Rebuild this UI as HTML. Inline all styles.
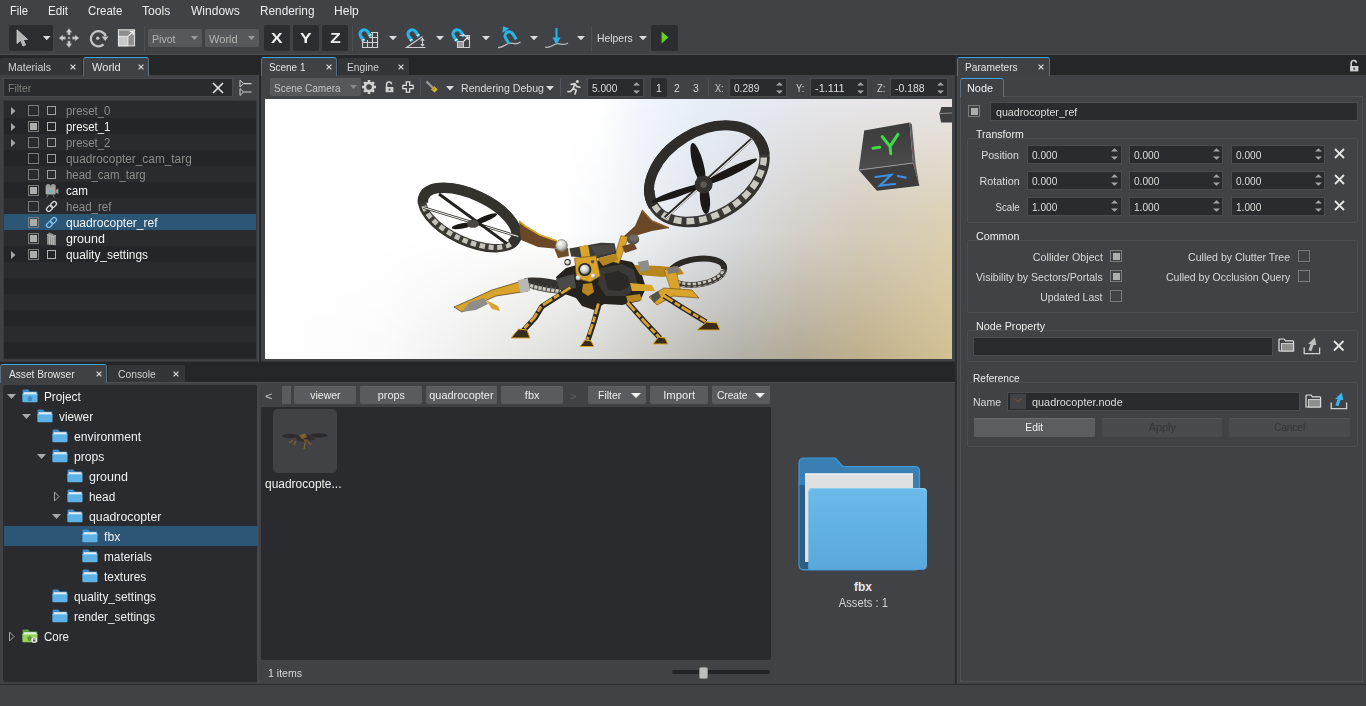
<!DOCTYPE html>
<html><head><meta charset="utf-8"><title>Editor</title>
<style>
html,body{margin:0;padding:0;}
body{width:1366px;height:706px;overflow:hidden;background:#414246;font-family:"Liberation Sans",sans-serif;font-size:12px;position:relative;}
#r{position:absolute;left:0;top:0;width:1366px;height:706px;overflow:hidden;}
#r div,#r svg{position:absolute;}
#r svg{overflow:visible;}
</style></head><body><div id="r">
<div style="left:0px;top:54px;width:1366px;height:1px;background:#4e4f53;"></div>
<div style="left:0px;top:55px;width:1366px;height:20px;background:#252628;"></div>
<div style="left:0px;top:362px;width:957px;height:20px;background:#252628;"></div>
<div style="left:0px;top:361px;width:957px;height:1px;background:#35363a;"></div>
<div style="left:0px;top:382px;width:957px;height:1px;background:#4e4f53;"></div>
<div style="left:259px;top:55px;width:2px;height:327px;background:#252628;"></div>
<div style="left:258px;top:75px;width:1px;height:287px;background:#4a4b4f;"></div>
<div style="left:955px;top:55px;width:2px;height:630px;background:#2c2d30;"></div>
<div style="left:957px;top:75px;width:1px;height:610px;background:#4a4b4f;"></div>
<div style="left:0px;top:684px;width:1366px;height:1px;background:#2c2d30;"></div>
<div style="left:0px;top:685px;width:1366px;height:21px;background:#414246;"></div>
<div style="left:0px;top:58px;width:82px;height:17px;background:#343538;border-radius:2px 2px 0 0;"></div>
<div style="left:8.00px;top:59.20px;line-height:16px;font-size:10.67px;color:#d0d0d0;transform:scaleX(0.9944);transform-origin:0 50%;white-space:nowrap;">Materials</div>
<svg style="left:69.5px;top:63.6px;" width="6" height="6" viewBox="0 0 6 6"><path d="M0.6 0.6L5.4 5.4M5.4 0.6L0.6 5.4" stroke="#d8d8d8" stroke-width="1.25"/></svg>
<div style="left:83px;top:57px;width:66px;height:19px;background:#404145;border:1px solid #5b6f7c;border-bottom:none;border-top:1px solid #3da5e0;border-radius:3px 3px 0 0;box-sizing:border-box;"></div>
<div style="left:91.50px;top:59.20px;line-height:16px;font-size:10.67px;color:#e4e4e4;transform:scaleX(1.0404);transform-origin:0 50%;white-space:nowrap;">World</div>
<svg style="left:137.5px;top:63.6px;" width="6" height="6" viewBox="0 0 6 6"><path d="M0.6 0.6L5.4 5.4M5.4 0.6L0.6 5.4" stroke="#d8d8d8" stroke-width="1.25"/></svg>
<div style="left:261px;top:57px;width:76px;height:19px;background:#404145;border:1px solid #5b6f7c;border-bottom:none;border-top:1px solid #3da5e0;border-radius:3px 3px 0 0;box-sizing:border-box;"></div>
<div style="left:269.00px;top:59.20px;line-height:16px;font-size:10.67px;color:#e4e4e4;transform:scaleX(0.9315);transform-origin:0 50%;white-space:nowrap;">Scene 1</div>
<svg style="left:325.5px;top:63.6px;" width="6" height="6" viewBox="0 0 6 6"><path d="M0.6 0.6L5.4 5.4M5.4 0.6L0.6 5.4" stroke="#d8d8d8" stroke-width="1.25"/></svg>
<div style="left:338px;top:58px;width:71px;height:17px;background:#343538;border-radius:2px 2px 0 0;"></div>
<div style="left:347.00px;top:59.20px;line-height:16px;font-size:10.67px;color:#d0d0d0;transform:scaleX(0.9606);transform-origin:0 50%;white-space:nowrap;">Engine</div>
<svg style="left:397.5px;top:63.6px;" width="6" height="6" viewBox="0 0 6 6"><path d="M0.6 0.6L5.4 5.4M5.4 0.6L0.6 5.4" stroke="#d8d8d8" stroke-width="1.25"/></svg>
<div style="left:957px;top:57px;width:93px;height:19px;background:#404145;border:1px solid #5b6f7c;border-bottom:none;border-top:1px solid #3da5e0;border-radius:3px 3px 0 0;box-sizing:border-box;"></div>
<div style="left:965.00px;top:59.20px;line-height:16px;font-size:10.67px;color:#e4e4e4;transform:scaleX(0.9565);transform-origin:0 50%;white-space:nowrap;">Parameters</div>
<svg style="left:1037.5px;top:63.6px;" width="6" height="6" viewBox="0 0 6 6"><path d="M0.6 0.6L5.4 5.4M5.4 0.6L0.6 5.4" stroke="#d8d8d8" stroke-width="1.25"/></svg>
<div style="left:0px;top:364px;width:107px;height:19px;background:#404145;border:1px solid #5b6f7c;border-bottom:none;border-top:1px solid #3da5e0;border-radius:3px 3px 0 0;box-sizing:border-box;"></div>
<div style="left:8.50px;top:366.20px;line-height:16px;font-size:10.67px;color:#e4e4e4;transform:scaleX(0.9546);transform-origin:0 50%;white-space:nowrap;">Asset Browser</div>
<svg style="left:95.5px;top:370.6px;" width="6" height="6" viewBox="0 0 6 6"><path d="M0.6 0.6L5.4 5.4M5.4 0.6L0.6 5.4" stroke="#d8d8d8" stroke-width="1.25"/></svg>
<div style="left:108px;top:365px;width:77px;height:17px;background:#343538;border-radius:2px 2px 0 0;"></div>
<div style="left:117.50px;top:366.20px;line-height:16px;font-size:10.67px;color:#d0d0d0;transform:scaleX(0.9665);transform-origin:0 50%;white-space:nowrap;">Console</div>
<svg style="left:172.5px;top:370.6px;" width="6" height="6" viewBox="0 0 6 6"><path d="M0.6 0.6L5.4 5.4M5.4 0.6L0.6 5.4" stroke="#d8d8d8" stroke-width="1.25"/></svg>
<svg style="left:1349px;top:60px;" width="10" height="12" viewBox="0 0 10 12"><path d="M2.2 6V3.4a2.6 2.6 0 0 1 5.2-.6" fill="none" stroke="#cfcfcf" stroke-width="1.6"/><rect x="1" y="6" width="8.4" height="5.4" fill="#cfcfcf"/><rect x="4.3" y="7.6" width="1.8" height="2.2" fill="#555"/></svg>
<div style="left:10.00px;top:3.00px;line-height:16px;font-size:12px;color:#ececec;transform:scaleX(0.9279);transform-origin:0 50%;white-space:nowrap;">File</div>
<div style="left:48.00px;top:3.00px;line-height:16px;font-size:12px;color:#ececec;transform:scaleX(0.9720);transform-origin:0 50%;white-space:nowrap;">Edit</div>
<div style="left:88.30px;top:3.00px;line-height:16px;font-size:12px;color:#ececec;transform:scaleX(0.9532);transform-origin:0 50%;white-space:nowrap;">Create</div>
<div style="left:142.00px;top:3.00px;line-height:16px;font-size:12px;color:#ececec;transform:scaleX(1.0118);transform-origin:0 50%;white-space:nowrap;">Tools</div>
<div style="left:191.00px;top:3.00px;line-height:16px;font-size:12px;color:#ececec;transform:scaleX(1.0016);transform-origin:0 50%;white-space:nowrap;">Windows</div>
<div style="left:259.60px;top:3.00px;line-height:16px;font-size:12px;color:#ececec;transform:scaleX(0.9844);transform-origin:0 50%;white-space:nowrap;">Rendering</div>
<div style="left:333.70px;top:3.00px;line-height:16px;font-size:12px;color:#ececec;transform:scaleX(1.0032);transform-origin:0 50%;white-space:nowrap;">Help</div>
<div style="left:9px;top:25px;width:44px;height:26px;background:#2c2d30;border-radius:2px;"></div>
<svg style="left:16px;top:29px;" width="13" height="18" viewBox="0 0 13 18"><path d="M1 .8V14.6L4.6 11.4L7 17L9.6 15.9L7.2 10.4H11.6Z" fill="#b4b4b4" stroke="#d8d8d8" stroke-width=".7"/></svg>
<svg style="left:43px;top:35.6px;" width="7.5" height="4.2" viewBox="0 0 7.5 4.2"><path d="M0 0H7.5L3.75 4.2Z" fill="#dcdcdc"/></svg>
<svg style="left:58px;top:28px;" width="22" height="20" viewBox="0 0 22 20"><g fill="#cfcfcf" stroke="#8a8a8a" stroke-width=".5">
<path d="M11 .6L14 4.2H12.2V7H9.8V4.2H8Z"/><path d="M11 19.4L14 15.8H12.2V13H9.8V15.8H8Z"/>
<path d="M1 10L4.8 7V8.8H7.6V11.2H4.8V13Z"/><path d="M21 10L17.2 7V8.8H14.4V11.2H17.2V13Z"/>
<circle cx="11" cy="10" r="1.1"/></g></svg>
<svg style="left:88px;top:28px;" width="21" height="20" viewBox="0 0 21 20"><path d="M15.5 16.4A7.6 7.6 0 1 1 17.6 8.2" fill="none" stroke="#c4c4c4" stroke-width="2.3"/>
<path d="M13.6 8.6L20.6 8.6L17.2 13Z" fill="#c4c4c4"/><circle cx="9.8" cy="10.2" r="1.6" fill="#cfcfcf"/></svg>
<svg style="left:117px;top:28px;" width="20" height="20" viewBox="0 0 20 20"><rect x="1.5" y="1.8" width="16" height="16" fill="#8e8e8e" stroke="#d8d8d8" stroke-width="1.2"/>
<rect x="1.5" y="8.4" width="9.4" height="9.4" fill="#c8c8c8" stroke="#e4e4e4" stroke-width="1"/>
<path d="M11.4 8.2L16 3.6M12.6 3.4H16.2V7" fill="none" stroke="#f0f0f0" stroke-width="1.2"/></svg>
<div style="left:144px;top:26px;width:1px;height:25px;background:#4e4f53;"></div>
<div style="left:148px;top:29px;width:54px;height:18px;background:#57585c;border-radius:2px;"></div>
<div style="left:151.50px;top:30.60px;line-height:16px;font-size:10.67px;color:#b4b4b4;transform:scaleX(0.9923);transform-origin:0 50%;white-space:nowrap;">Pivot</div>
<svg style="left:191px;top:36.0px;" width="7" height="4" viewBox="0 0 7 4"><path d="M0 0H7L3.5 4Z" fill="#9a9a9a"/></svg>
<div style="left:205px;top:29px;width:54px;height:18px;background:#57585c;border-radius:2px;"></div>
<div style="left:208.70px;top:30.60px;line-height:16px;font-size:10.67px;color:#b4b4b4;transform:scaleX(1.0404);transform-origin:0 50%;white-space:nowrap;">World</div>
<svg style="left:248px;top:36.0px;" width="7" height="4" viewBox="0 0 7 4"><path d="M0 0H7L3.5 4Z" fill="#9a9a9a"/></svg>
<div style="left:264px;top:25px;width:26px;height:26px;background:#2c2d30;border-radius:2px;"></div>
<div style="left:272.16px;top:30.40px;line-height:16px;font-size:14.5px;color:#f0f0f0;transform:scaleX(1.1890);transform-origin:50% 50%;white-space:nowrap;font-weight:bold;">X</div>
<div style="left:293px;top:25px;width:26px;height:26px;background:#2c2d30;border-radius:2px;"></div>
<div style="left:301.16px;top:30.40px;line-height:16px;font-size:14.5px;color:#f0f0f0;transform:scaleX(1.1890);transform-origin:50% 50%;white-space:nowrap;font-weight:bold;">Y</div>
<div style="left:322px;top:25px;width:26px;height:26px;background:#2c2d30;border-radius:2px;"></div>
<div style="left:330.57px;top:30.40px;line-height:16px;font-size:14.5px;color:#f0f0f0;transform:scaleX(1.1855);transform-origin:50% 50%;white-space:nowrap;font-weight:bold;">Z</div>
<div style="left:352px;top:26px;width:1px;height:25px;background:#4e4f53;"></div>
<svg style="left:357px;top:27px;" width="22" height="22" viewBox="0 0 22 22"><g transform="translate(7.5 7.5) rotate(-35) scale(1.0)"><path d="M-4.2 5.5V-.5A4.2 4.2 0 0 1 4.2 -.5V5.5" fill="none" stroke="#28b4e6" stroke-width="3.2"/><path d="M-5.8 3.6H-2.6M2.6 3.6H5.8" stroke="#fff" stroke-width="1.1"/></g><path d="M5.5 12.5V20.5H20.5V5.5H14M5.5 15.5H20.5M10.5 13V20.5M15.5 6V20.5M12 10.5H20.5" fill="none" stroke="#cfcfcf" stroke-width="1.1"/></svg>
<svg style="left:388.5px;top:35.6px;" width="8" height="4.2" viewBox="0 0 8 4.2"><path d="M0 0H8L4.0 4.2Z" fill="#dcdcdc"/></svg>
<svg style="left:404px;top:27px;" width="23" height="22" viewBox="0 0 23 22"><g transform="translate(8.5 7.5) rotate(-35) scale(1.0)"><path d="M-4.2 5.5V-.5A4.2 4.2 0 0 1 4.2 -.5V5.5" fill="none" stroke="#28b4e6" stroke-width="3.2"/><path d="M-5.8 3.6H-2.6M2.6 3.6H5.8" stroke="#fff" stroke-width="1.1"/></g><path d="M1.5 20.5H21.5M2.5 20.5L18.5 9.5M18.5 12V18.5M16.8 13.6L18.5 11.6L20.2 13.6M16.8 17L18.5 19L20.2 17" fill="none" stroke="#cfcfcf" stroke-width="1.1"/></svg>
<svg style="left:435.5px;top:35.6px;" width="8" height="4.2" viewBox="0 0 8 4.2"><path d="M0 0H8L4.0 4.2Z" fill="#dcdcdc"/></svg>
<svg style="left:450px;top:27px;" width="22" height="22" viewBox="0 0 22 22"><g transform="translate(7.5 7.5) rotate(-35) scale(1.0)"><path d="M-4.2 5.5V-.5A4.2 4.2 0 0 1 4.2 -.5V5.5" fill="none" stroke="#28b4e6" stroke-width="3.2"/><path d="M-5.8 3.6H-2.6M2.6 3.6H5.8" stroke="#fff" stroke-width="1.1"/></g><path d="M9.5 8.5H19.5V20.5H7.5V14" fill="none" stroke="#cfcfcf" stroke-width="1.1"/><rect x="7.5" y="14.5" width="6" height="6" fill="#9a9a9a" stroke="#cfcfcf" stroke-width="1"/><path d="M13.5 14.5L18 10M15 9.8H18.2V13" fill="none" stroke="#e8e8e8" stroke-width="1.1"/></svg>
<svg style="left:482px;top:35.6px;" width="8" height="4.2" viewBox="0 0 8 4.2"><path d="M0 0H8L4.0 4.2Z" fill="#dcdcdc"/></svg>
<svg style="left:497px;top:26px;" width="25" height="24" viewBox="0 0 25 24"><path d="M1 21.5C5 22 7.5 19 11.5 17.5S18 20 23.5 16" fill="none" stroke="#bdbdbd" stroke-width="1.3"/><g transform="translate(12.5 10.5) rotate(-32)"><path d="M-4.2 6V-.5A4.2 4.2 0 0 1 4.2 -.5V6" fill="none" stroke="#28b4e6" stroke-width="3"/><path d="M0 -4V-10.5M-2.6 -7.6L0 -11L2.6 -7.6Z" stroke="#28b4e6" stroke-width="1.4" fill="#28b4e6"/></g></svg>
<svg style="left:529.5px;top:35.6px;" width="8" height="4.2" viewBox="0 0 8 4.2"><path d="M0 0H8L4.0 4.2Z" fill="#dcdcdc"/></svg>
<svg style="left:544px;top:26px;" width="25" height="24" viewBox="0 0 25 24"><path d="M1 21C5 22.5 8 19.5 12 18S19 20.5 24 17" fill="none" stroke="#bdbdbd" stroke-width="1.3"/>
<path d="M12.5 2V17" stroke="#28b4e6" stroke-width="2"/><path d="M8.4 11.5H16.6L12.5 18.4Z" fill="#28b4e6"/></svg>
<svg style="left:576.5px;top:35.6px;" width="8" height="4.2" viewBox="0 0 8 4.2"><path d="M0 0H8L4.0 4.2Z" fill="#dcdcdc"/></svg>
<div style="left:591px;top:26px;width:1px;height:25px;background:#4e4f53;"></div>
<div style="left:597.30px;top:30.30px;line-height:16px;font-size:10.67px;color:#dcdcdc;transform:scaleX(0.9745);transform-origin:0 50%;white-space:nowrap;">Helpers</div>
<svg style="left:638.5px;top:35.8px;" width="8" height="4.2" viewBox="0 0 8 4.2"><path d="M0 0H8L4.0 4.2Z" fill="#dcdcdc"/></svg>
<div style="left:651px;top:25px;width:27px;height:26px;background:#2c2d30;border-radius:2px;"></div>
<svg style="left:661px;top:31px;" width="8" height="13" viewBox="0 0 8 13"><path d="M.6 .6V12.4L7.4 6.5Z" fill="#63d321"/></svg>
<div style="left:3px;top:78px;width:230px;height:19px;background:#2a2b2e;border:1px solid #4a4b4f;box-sizing:border-box;"></div>
<div style="left:8.30px;top:80.30px;line-height:16px;font-size:10.67px;color:#7e7e7e;transform:scaleX(0.9819);transform-origin:0 50%;white-space:nowrap;">Filter</div>
<svg style="left:212px;top:82px;" width="12" height="12" viewBox="0 0 12 12"><path d="M1 1L11 11M11 1L1 11" stroke="#e0e0e0" stroke-width="1.7"/></svg>
<svg style="left:239px;top:79px;" width="13" height="17" viewBox="0 0 13 17"><path d="M1 1.2V8L4.6 4.6ZM1 9.6V16.4L4.6 13Z" fill="none" stroke="#d0d0d0" stroke-width="1"/><path d="M4.6 4.6H12.5M4.6 13H12.5" stroke="#d0d0d0" stroke-width="1.1"/></svg>
<div style="left:3px;top:100px;width:254px;height:260px;background:#2a2b2e;border:1px solid #38393c;box-sizing:border-box;"></div>
<div style="left:4px;top:118px;width:252px;height:16px;background:#242528;"></div>
<div style="left:4px;top:150px;width:252px;height:16px;background:#242528;"></div>
<div style="left:4px;top:182px;width:252px;height:16px;background:#242528;"></div>
<div style="left:4px;top:214px;width:252px;height:16px;background:#242528;"></div>
<div style="left:4px;top:246px;width:252px;height:16px;background:#242528;"></div>
<div style="left:4px;top:278px;width:252px;height:16px;background:#242528;"></div>
<div style="left:4px;top:310px;width:252px;height:16px;background:#242528;"></div>
<div style="left:4px;top:342px;width:252px;height:16px;background:#242528;"></div>
<div style="left:4px;top:214px;width:252px;height:16px;background:#2b5676;"></div>
<svg style="left:11px;top:106.5px;" width="5" height="8" viewBox="0 0 5 8"><path d="M0 0L4.4 4L0 8Z" fill="#a8a8a8"/></svg>
<div style="left:28px;top:105px;width:11px;height:11px;border:1px solid #7b7b7b;box-sizing:border-box;"></div>
<div style="left:47px;top:106px;width:9px;height:9px;border:1.5px solid #a0a0a0;box-sizing:border-box;"></div>
<div style="left:65.50px;top:102.80px;line-height:16px;font-size:12px;color:#8c8c8c;transform:scaleX(0.9505);transform-origin:0 50%;white-space:nowrap;">preset_0</div>
<svg style="left:11px;top:122.5px;" width="5" height="8" viewBox="0 0 5 8"><path d="M0 0L4.4 4L0 8Z" fill="#a8a8a8"/></svg>
<div style="left:28px;top:121px;width:11px;height:11px;border:1px solid #7b7b7b;box-sizing:border-box;"><div style="left:1px;top:1px;width:7px;height:7px;background:#adadad;"></div></div>
<div style="left:47px;top:122px;width:9px;height:9px;border:1.5px solid #b4b4b4;box-sizing:border-box;"></div>
<div style="left:65.50px;top:118.80px;line-height:16px;font-size:12px;color:#f4f4f4;transform:scaleX(0.9505);transform-origin:0 50%;white-space:nowrap;">preset_1</div>
<svg style="left:11px;top:138.5px;" width="5" height="8" viewBox="0 0 5 8"><path d="M0 0L4.4 4L0 8Z" fill="#a8a8a8"/></svg>
<div style="left:28px;top:137px;width:11px;height:11px;border:1px solid #7b7b7b;box-sizing:border-box;"></div>
<div style="left:47px;top:138px;width:9px;height:9px;border:1.5px solid #a0a0a0;box-sizing:border-box;"></div>
<div style="left:65.50px;top:134.80px;line-height:16px;font-size:12px;color:#8c8c8c;transform:scaleX(0.9505);transform-origin:0 50%;white-space:nowrap;">preset_2</div>
<div style="left:28px;top:153px;width:11px;height:11px;border:1px solid #7b7b7b;box-sizing:border-box;"></div>
<div style="left:47px;top:154px;width:9px;height:9px;border:1.5px solid #a0a0a0;box-sizing:border-box;"></div>
<div style="left:65.50px;top:150.80px;line-height:16px;font-size:12px;color:#8c8c8c;transform:scaleX(0.9868);transform-origin:0 50%;white-space:nowrap;">quadrocopter_cam_targ</div>
<div style="left:28px;top:169px;width:11px;height:11px;border:1px solid #7b7b7b;box-sizing:border-box;"></div>
<div style="left:47px;top:170px;width:9px;height:9px;border:1.5px solid #a0a0a0;box-sizing:border-box;"></div>
<div style="left:65.50px;top:166.80px;line-height:16px;font-size:12px;color:#8c8c8c;transform:scaleX(0.9544);transform-origin:0 50%;white-space:nowrap;">head_cam_targ</div>
<div style="left:28px;top:185px;width:11px;height:11px;border:1px solid #7b7b7b;box-sizing:border-box;"><div style="left:1px;top:1px;width:7px;height:7px;background:#adadad;"></div></div>
<svg style="left:44px;top:183px;" width="15" height="15" viewBox="0 0 15 15"><circle cx="4.2" cy="3.6" r="2.6" fill="#9a9a9a"/><circle cx="9.2" cy="3.6" r="2.6" fill="#9a9a9a"/><rect x="1.6" y="4.6" width="10" height="7" rx="1" fill="#a8a8a8"/><path d="M11.6 7L14.4 5.4V11L11.6 9.4Z" fill="#9a9a9a"/><path d="M5 6.2V10.2L8.4 8.2Z" fill="#2fd0d8"/><path d="M4 12L2.6 14.6M9 12L10.4 14.6" stroke="#8a8a8a" stroke-width=".9"/></svg>
<div style="left:65.50px;top:182.80px;line-height:16px;font-size:12px;color:#f4f4f4;transform:scaleX(0.9697);transform-origin:0 50%;white-space:nowrap;">cam</div>
<div style="left:28px;top:201px;width:11px;height:11px;border:1px solid #7b7b7b;box-sizing:border-box;"></div>
<svg style="left:46px;top:201px;" width="11" height="11" viewBox="0 0 11 11"><g fill="none" stroke="#d8d8d8" stroke-width="1.3" transform="rotate(-45 5.5 5.5)"><rect x="-.6" y="3.3" width="6.6" height="4.4" rx="2.2"/><rect x="5" y="3.3" width="6.6" height="4.4" rx="2.2"/></g></svg>
<div style="left:65.50px;top:198.80px;line-height:16px;font-size:12px;color:#8c8c8c;transform:scaleX(0.9588);transform-origin:0 50%;white-space:nowrap;">head_ref</div>
<div style="left:28px;top:217px;width:11px;height:11px;border:1px solid #7b7b7b;box-sizing:border-box;"><div style="left:1px;top:1px;width:7px;height:7px;background:#adadad;"></div></div>
<svg style="left:46px;top:217px;" width="11" height="11" viewBox="0 0 11 11"><g fill="none" stroke="#7cc0ee" stroke-width="1.3" transform="rotate(-45 5.5 5.5)"><rect x="-.6" y="3.3" width="6.6" height="4.4" rx="2.2"/><rect x="5" y="3.3" width="6.6" height="4.4" rx="2.2"/></g></svg>
<div style="left:65.50px;top:214.80px;line-height:16px;font-size:12px;color:#f4f4f4;transform:scaleX(1.0018);transform-origin:0 50%;white-space:nowrap;">quadrocopter_ref</div>
<div style="left:28px;top:233px;width:11px;height:11px;border:1px solid #7b7b7b;box-sizing:border-box;"><div style="left:1px;top:1px;width:7px;height:7px;background:#adadad;"></div></div>
<svg style="left:46px;top:232px;" width="11" height="14" viewBox="0 0 11 14"><path d="M1 2.4L3.6 .6L10 3.4V13.2L1 12.4Z" fill="#8c8c8c"/><path d="M1 2.4L7.6 4.8V13M3.4 3.4V12.6M5.6 4.2V12.8M7.6 4.8L10 3.4" stroke="#c4c4c4" stroke-width=".8" fill="none"/></svg>
<div style="left:65.50px;top:230.80px;line-height:16px;font-size:12px;color:#f4f4f4;transform:scaleX(1.0412);transform-origin:0 50%;white-space:nowrap;">ground</div>
<svg style="left:11px;top:250.5px;" width="5" height="8" viewBox="0 0 5 8"><path d="M0 0L4.4 4L0 8Z" fill="#a8a8a8"/></svg>
<div style="left:28px;top:249px;width:11px;height:11px;border:1px solid #7b7b7b;box-sizing:border-box;"><div style="left:1px;top:1px;width:7px;height:7px;background:#adadad;"></div></div>
<div style="left:47px;top:250px;width:9px;height:9px;border:1.5px solid #b4b4b4;box-sizing:border-box;"></div>
<div style="left:65.50px;top:246.80px;line-height:16px;font-size:12px;color:#f4f4f4;transform:scaleX(0.9909);transform-origin:0 50%;white-space:nowrap;">quality_settings</div>
<div style="left:270px;top:78px;width:91px;height:18px;background:#57585c;border-radius:2px;"></div>
<div style="left:273.60px;top:79.60px;line-height:16px;font-size:10.67px;color:#c4c4c4;transform:scaleX(0.9367);transform-origin:0 50%;white-space:nowrap;">Scene Camera</div>
<svg style="left:350px;top:85.0px;" width="7" height="4" viewBox="0 0 7 4"><path d="M0 0H7L3.5 4Z" fill="#8a8a8a"/></svg>
<svg style="left:362px;top:80px;" width="14" height="14" viewBox="0 0 14 14"><g transform="translate(7 7)"><circle r="4.1" fill="none" stroke="#d2d2d2" stroke-width="2.6"/><rect x="-1.3" y="-7" width="2.6" height="3" fill="#d2d2d2" transform="rotate(0)"/><rect x="-1.3" y="-7" width="2.6" height="3" fill="#d2d2d2" transform="rotate(45)"/><rect x="-1.3" y="-7" width="2.6" height="3" fill="#d2d2d2" transform="rotate(90)"/><rect x="-1.3" y="-7" width="2.6" height="3" fill="#d2d2d2" transform="rotate(135)"/><rect x="-1.3" y="-7" width="2.6" height="3" fill="#d2d2d2" transform="rotate(180)"/><rect x="-1.3" y="-7" width="2.6" height="3" fill="#d2d2d2" transform="rotate(225)"/><rect x="-1.3" y="-7" width="2.6" height="3" fill="#d2d2d2" transform="rotate(270)"/><rect x="-1.3" y="-7" width="2.6" height="3" fill="#d2d2d2" transform="rotate(315)"/></g></svg>
<svg style="left:385px;top:81px;" width="9" height="12" viewBox="0 0 9 12"><path d="M1.6 6V3.6a2.5 2.5 0 0 1 5-.4" fill="none" stroke="#cfcfcf" stroke-width="1.5"/><rect x=".6" y="6" width="7.8" height="5.2" fill="#cfcfcf"/><rect x="3.6" y="7.6" width="1.8" height="2" fill="#555"/></svg>
<svg style="left:402px;top:81px;" width="12" height="12" viewBox="0 0 12 12"><path d="M4.3 .8H7.7V4.3H11.2V7.7H7.7V11.2H4.3V7.7H.8V4.3H4.3Z" fill="none" stroke="#e2e2e2" stroke-width="1.2"/></svg>
<div style="left:420px;top:79px;width:1px;height:17px;background:#54555a;"></div>
<svg style="left:425px;top:80px;" width="14" height="14" viewBox="0 0 14 14"><path d="M1.5 1.5L8 8" stroke="#9a9a9a" stroke-width="2.4"/><path d="M6 9.4L9.4 6L12.6 9.4L9.6 12.6Z" fill="#d8b62c"/><path d="M7 10.6L10.6 7" stroke="#8a7a30" stroke-width="1"/></svg>
<svg style="left:446px;top:85.5px;" width="8" height="4.5" viewBox="0 0 8 4.5"><path d="M0 0H8L4.0 4.5Z" fill="#dcdcdc"/></svg>
<div style="left:461.00px;top:79.80px;line-height:16px;font-size:10.67px;color:#dcdcdc;transform:scaleX(0.9928);transform-origin:0 50%;white-space:nowrap;">Rendering Debug</div>
<svg style="left:546px;top:85.5px;" width="8" height="4.5" viewBox="0 0 8 4.5"><path d="M0 0H8L4.0 4.5Z" fill="#dcdcdc"/></svg>
<div style="left:560px;top:79px;width:1px;height:17px;background:#54555a;"></div>
<svg style="left:567px;top:79px;" width="15" height="16" viewBox="0 0 15 16"><g fill="none" stroke="#d4d4d4" stroke-width="1.7" stroke-linecap="round"><circle cx="10.4" cy="2.4" r="1.5" fill="#d4d4d4" stroke="none"/><path d="M4.2 5.4L8 4.6L9.6 7.4L12.8 8.2M8 4.8L6.2 9.4L9.2 11.4L8 15M6.2 9.6L3.6 12.4L1 12.6"/></g></svg>
<div style="left:587px;top:78px;width:57px;height:19px;background:#2a2b2e;border:1px solid #4b4c50;box-sizing:border-box;"></div>
<div style="left:592.20px;top:80.10px;line-height:16px;font-size:10.67px;color:#dedede;transform:scaleX(0.9483);transform-origin:0 50%;white-space:nowrap;">5.000</div>
<svg style="left:633px;top:81.6px;" width="7" height="12" viewBox="0 0 7 12"><path d="M0 3.6L3.5 .2L7 3.6Z" fill="#a4a4a4"/><path d="M0 8.4L3.5 11.8L7 8.4Z" fill="#a4a4a4"/></svg>
<div style="left:651px;top:78px;width:16px;height:19px;background:#2c2d30;border-radius:2px;"></div>
<div style="left:655.63px;top:79.80px;line-height:16px;font-size:10.67px;color:#e4e4e4;transform:scaleX(0.9692);transform-origin:50% 50%;white-space:nowrap;">1</div>
<div style="left:674.03px;top:79.80px;line-height:16px;font-size:10.67px;color:#d6d6d6;transform:scaleX(0.9692);transform-origin:50% 50%;white-space:nowrap;">2</div>
<div style="left:692.63px;top:79.80px;line-height:16px;font-size:10.67px;color:#d6d6d6;transform:scaleX(0.9692);transform-origin:50% 50%;white-space:nowrap;">3</div>
<div style="left:708px;top:79px;width:1px;height:17px;background:#54555a;"></div>
<div style="left:715.20px;top:79.80px;line-height:16px;font-size:10.67px;color:#d0d0d0;transform:scaleX(0.8540);transform-origin:0 50%;white-space:nowrap;">X:</div>
<div style="left:729px;top:78px;width:58px;height:19px;background:#2a2b2e;border:1px solid #4b4c50;box-sizing:border-box;"></div>
<div style="left:733.50px;top:80.10px;line-height:16px;font-size:10.67px;color:#dedede;transform:scaleX(0.9483);transform-origin:0 50%;white-space:nowrap;">0.289</div>
<svg style="left:776px;top:81.6px;" width="7" height="12" viewBox="0 0 7 12"><path d="M0 3.6L3.5 .2L7 3.6Z" fill="#a4a4a4"/><path d="M0 8.4L3.5 11.8L7 8.4Z" fill="#a4a4a4"/></svg>
<div style="left:796.30px;top:79.80px;line-height:16px;font-size:10.67px;color:#d0d0d0;transform:scaleX(0.8654);transform-origin:0 50%;white-space:nowrap;">Y:</div>
<div style="left:810px;top:78px;width:58px;height:19px;background:#2a2b2e;border:1px solid #4b4c50;box-sizing:border-box;"></div>
<div style="left:814.50px;top:80.10px;line-height:16px;font-size:10.67px;color:#dedede;transform:scaleX(1.0320);transform-origin:0 50%;white-space:nowrap;">-1.111</div>
<svg style="left:857px;top:81.6px;" width="7" height="12" viewBox="0 0 7 12"><path d="M0 3.6L3.5 .2L7 3.6Z" fill="#a4a4a4"/><path d="M0 8.4L3.5 11.8L7 8.4Z" fill="#a4a4a4"/></svg>
<div style="left:877.40px;top:79.80px;line-height:16px;font-size:10.67px;color:#d0d0d0;transform:scaleX(0.8856);transform-origin:0 50%;white-space:nowrap;">Z:</div>
<div style="left:890px;top:78px;width:58px;height:19px;background:#2a2b2e;border:1px solid #4b4c50;box-sizing:border-box;"></div>
<div style="left:895.00px;top:80.10px;line-height:16px;font-size:10.67px;color:#dedede;transform:scaleX(0.9780);transform-origin:0 50%;white-space:nowrap;">-0.188</div>
<svg style="left:937px;top:81.6px;" width="7" height="12" viewBox="0 0 7 12"><path d="M0 3.6L3.5 .2L7 3.6Z" fill="#a4a4a4"/><path d="M0 8.4L3.5 11.8L7 8.4Z" fill="#a4a4a4"/></svg>
<svg style="left:265px;top:99px;overflow:hidden" width="687" height="260" viewBox="265 99 687 260"><defs><linearGradient id="gT" x1="0" x2="1" y1="0" y2="0"><stop offset="0.0000" stop-color="#ffffff"/><stop offset="0.4884" stop-color="#ffffff"/><stop offset="0.5465" stop-color="#f1f5fb"/><stop offset="0.6337" stop-color="#e7eef8"/><stop offset="0.7209" stop-color="#e5e9f1"/><stop offset="0.8227" stop-color="#e6e6ea"/><stop offset="1.0000" stop-color="#e8e4e6"/></linearGradient><linearGradient id="gM" x1="0" x2="1" y1="0" y2="0"><stop offset="0.0000" stop-color="#ffffff"/><stop offset="0.4302" stop-color="#ffffff"/><stop offset="0.4884" stop-color="#f8f9fb"/><stop offset="0.5465" stop-color="#eef1f5"/><stop offset="0.6337" stop-color="#e0e3e8"/><stop offset="0.6919" stop-color="#d9dbdd"/><stop offset="0.7791" stop-color="#d5d1cb"/><stop offset="0.8663" stop-color="#d4ccbc"/><stop offset="0.9390" stop-color="#d8ceb6"/><stop offset="1.0000" stop-color="#dcd0b0"/></linearGradient><linearGradient id="gB" x1="0" x2="1" y1="0" y2="0"><stop offset="0.0000" stop-color="#ffffff"/><stop offset="0.1686" stop-color="#fbfbfb"/><stop offset="0.2703" stop-color="#f1f1f1"/><stop offset="0.3721" stop-color="#e5e5e3"/><stop offset="0.4884" stop-color="#d7d7d3"/><stop offset="0.6047" stop-color="#c1bfb9"/><stop offset="0.6919" stop-color="#b3b0a7"/><stop offset="0.7791" stop-color="#b3aa95"/><stop offset="0.8663" stop-color="#bfb08c"/><stop offset="1.0000" stop-color="#d3c193"/></linearGradient><linearGradient id="mT" x1="0" x2="0" y1="0" y2="1"><stop offset="0" stop-color="#fff"/><stop offset=".5" stop-color="#000"/><stop offset="1" stop-color="#000"/></linearGradient><linearGradient id="mM" x1="0" x2="0" y1="0" y2="1"><stop offset="0" stop-color="#fff"/><stop offset=".5" stop-color="#fff"/><stop offset="1" stop-color="#000"/></linearGradient><mask id="kT" maskUnits="userSpaceOnUse" x="264" y="99" width="688" height="260"><rect x="264" y="99" width="688" height="260" fill="url(#mT)"/></mask><mask id="kM" maskUnits="userSpaceOnUse" x="264" y="99" width="688" height="260"><rect x="264" y="99" width="688" height="260" fill="url(#mM)"/></mask><radialGradient id="sph" cx=".4" cy=".35" r=".7"><stop offset="0" stop-color="#ffffff"/><stop offset=".6" stop-color="#c8c8c4"/><stop offset="1" stop-color="#6a6a66"/></radialGradient><linearGradient id="cubeT" x1="0" x2="0" y1="0" y2="1"><stop offset="0" stop-color="#3b3b3b"/><stop offset="1" stop-color="#4c4c4c"/></linearGradient></defs><rect x="264" y="99" width="688" height="260" fill="url(#gB)"/><rect x="264" y="99" width="688" height="260" fill="url(#gM)" mask="url(#kM)"/><rect x="264" y="99" width="688" height="260" fill="url(#gT)" mask="url(#kT)"/><g transform="rotate(-8 697 272)"><ellipse cx="697" cy="273" rx="27" ry="11.5" fill="none" stroke="#4a4843" stroke-width="6" pathLength="100" stroke-dasharray="50 50" stroke-dashoffset="-1"/><ellipse cx="697" cy="273" rx="27" ry="11.5" fill="none" stroke="#c9c9c2" stroke-width="4.6" pathLength="100" stroke-dasharray="2.60 1.60 2.60 1.60 2.60 1.60 2.60 1.60 2.60 1.60 2.60 1.60 2.60 1.60 2.60 1.60 2.60 1.60 2.60 1.60 2.60 55.40" stroke-dashoffset="-2"/><ellipse cx="697" cy="272" rx="29" ry="13.5" fill="none" stroke="#3a3834" stroke-width="1.5"/><ellipse cx="697" cy="271" rx="27.5" ry="12" fill="none" stroke="#2c2a27" stroke-width="6" pathLength="100" stroke-dasharray="54 46" stroke-dashoffset="-48"/></g><g transform="rotate(9 549 285)"><ellipse cx="549" cy="287" rx="26" ry="5" fill="#c9c9c2" stroke="#55534e" stroke-width="1"/><ellipse cx="549" cy="283.5" rx="26" ry="4.5" fill="#34322e"/><rect x="525.0" y="286" width="1.2" height="6" fill="#55534e"/><rect x="529.3" y="286" width="1.2" height="6" fill="#55534e"/><rect x="533.6" y="286" width="1.2" height="6" fill="#55534e"/><rect x="537.9" y="286" width="1.2" height="6" fill="#55534e"/><rect x="542.2" y="286" width="1.2" height="6" fill="#55534e"/><rect x="546.5" y="286" width="1.2" height="6" fill="#55534e"/><rect x="550.8" y="286" width="1.2" height="6" fill="#55534e"/><rect x="555.1" y="286" width="1.2" height="6" fill="#55534e"/><rect x="559.4" y="286" width="1.2" height="6" fill="#55534e"/><rect x="563.7" y="286" width="1.2" height="6" fill="#55534e"/><rect x="568.0" y="286" width="1.2" height="6" fill="#55534e"/><rect x="572.3" y="286" width="1.2" height="6" fill="#55534e"/></g><g transform="rotate(-31 707 174)"><ellipse cx="707" cy="174" rx="61.5" ry="41" fill="none" stroke="#3b3935" stroke-width="9" pathLength="100" stroke-dasharray="56 44" stroke-dashoffset="1"/><ellipse cx="707" cy="174" rx="61.5" ry="41" fill="none" stroke="#c9c9c0" stroke-width="6.4" pathLength="100" stroke-dasharray="2.40 1.50 2.40 1.50 2.40 1.50 2.40 1.50 2.40 1.50 2.40 1.50 2.40 1.50 2.40 1.50 2.40 1.50 2.40 1.50 2.40 1.50 2.40 1.50 2.40 1.50 2.40 46.90" stroke-dashoffset="-1"/><ellipse cx="707" cy="174" rx="66" ry="46" fill="none" stroke="#34322d" stroke-width="2.4"/><ellipse cx="707" cy="174" rx="62.5" ry="42.5" fill="none" stroke="#2f2d29" stroke-width="10" pathLength="100" stroke-dasharray="54 46" stroke-dashoffset="-50"/></g><path d="M665 217.7L751.5 139.4" stroke="#2a2826" stroke-width="3.2"/><path d="M665.6 218.4L752 140" stroke="#f2f2ee" stroke-width="1.1"/><ellipse cx="698.0" cy="163.8" rx="21.5" ry="5.4" fill="#1b1917" transform="rotate(-105.0 698.0 163.8)"/><ellipse cx="730.3" cy="171.8" rx="29.6" ry="4" fill="#1b1917" transform="rotate(-25.5 730.3 171.8)"/><ellipse cx="677.8" cy="193.2" rx="27.2" ry="3.4" fill="#1b1917" transform="rotate(161.3 677.8 193.2)"/><ellipse cx="705.0" cy="199.2" rx="14.8" ry="5" fill="#1b1917" transform="rotate(84.6 705.0 199.2)"/><circle cx="703.6" cy="184.5" r="9" fill="#34322f"/><circle cx="703.6" cy="184.5" r="3.2" fill="#5c5a55"/><g transform="rotate(25 469.7 217.7)"><ellipse cx="469.7" cy="217.7" rx="50.5" ry="23" fill="none" stroke="#3d3b36" stroke-width="7" pathLength="100" stroke-dasharray="50 50" stroke-dashoffset="-1"/><ellipse cx="469.7" cy="217.7" rx="50.5" ry="23" fill="none" stroke="#c4c4bc" stroke-width="5" pathLength="100" stroke-dasharray="2.20 1.50 2.20 1.50 2.20 1.50 2.20 1.50 2.20 1.50 2.20 1.50 2.20 1.50 2.20 1.50 2.20 1.50 2.20 1.50 2.20 1.50 2.20 1.50 2.20 53.40" stroke-dashoffset="-3"/><ellipse cx="469.7" cy="217.7" rx="54.5" ry="27" fill="none" stroke="#36342f" stroke-width="2.2"/><ellipse cx="469.7" cy="217.7" rx="50.5" ry="23" fill="none" stroke="#34322d" stroke-width="10.5" pathLength="100" stroke-dasharray="56 44" stroke-dashoffset="-47"/></g><path d="M423.4 207.5L518.3 236.5" stroke="#3a3834" stroke-width="2.6"/><path d="M423.4 207.5L518.3 236.5" stroke="#f4f4f0" stroke-width="1"/><path d="M439 194L507 243.6" stroke="#24221f" stroke-width="3"/><ellipse cx="462.4" cy="225.9" rx="10.9" ry="2.6" fill="#1b1917" transform="rotate(168.8 462.4 225.9)"/><ellipse cx="485.0" cy="218.9" rx="13.0" ry="2.8" fill="#1b1917" transform="rotate(-22.2 485.0 218.9)"/><ellipse cx="473" cy="223.8" rx="6" ry="4" fill="#4a4843"/><path d="M519 221L525 226L540 235L557 241L559 249L538 247L521 240Z" fill="#6a4726"/><path d="M519 221L525 226L540 235L557 241" fill="none" stroke="#d9a42c" stroke-width="1.8"/><path d="M642 210L652 221L669 228L652 231L638 235L630 241L624 236L635 226Z" fill="#6a4726"/><path d="M642 210L652 221L669 228" fill="none" stroke="#8a6232" stroke-width="1.4"/><path d="M556 277L566 268L584 263L612 258L632 262L641 272L646 288L640 301L622 305L604 304L594 310L582 306L576 298L562 293Z" fill="#26231f"/><path d="M600 268L622 264L634 270L638 286L626 296L606 296L598 284Z" fill="#3a3936"/><path d="M604 274L618 271L628 276L630 286L620 291L608 290Z" fill="#2a2927"/><path d="M556 279L574 274L576 288L560 290Z" fill="#4a4a46"/><path d="M612.8 261.7L621 235.6L628.4 237L619 263.5Z" fill="#d9a42c" stroke="#7a5a18" stroke-width=".6"/><ellipse cx="633" cy="239.5" rx="6.2" ry="5" fill="#55534e"/><ellipse cx="634" cy="238" rx="4.6" ry="3.4" fill="#6c6a64"/><path d="M622 246L634 243L637 249L625 253Z" fill="#6a4726"/><path d="M569.4 248.6L600.9 242.7L614.6 243.3L616.4 253.4L597.3 258.6L571.2 256.4Z" fill="#3b3a37"/><path d="M590 246L613 244.4L614.6 252L596 256Z" fill="#4a4946"/><path d="M579.5 246.4L588 244.8L590.4 257.6L581.6 257.8Z" fill="#d9a42c"/><path d="M597.3 258.6L616.4 253.4L618 260L603 266Z" fill="#b8861f"/><path d="M554.5 249L568 248L569 256L558 258Z" fill="#6e4e2a"/><circle cx="561.6" cy="245.4" r="5.8" fill="url(#sph)" stroke="#8a8a84" stroke-width=".8"/><path d="M574.7 258.2L596.1 255.8L600.3 276L590.2 282L576.5 278.4Z" fill="#d9a42c" stroke="#7a5a18" stroke-width=".8"/><circle cx="584.8" cy="269.5" r="6.6" fill="#2c2a27"/><circle cx="584.8" cy="269.5" r="4.8" fill="url(#sph)"/><circle cx="567.6" cy="262.3" r="3.2" fill="#2c2a27"/><circle cx="567.6" cy="262.3" r="2.4" fill="url(#sph)"/><circle cx="578.3" cy="277.8" r="2.6" fill="url(#sph)"/><circle cx="593.2" cy="276" r="2.4" fill="url(#sph)"/><circle cx="592.6" cy="261.7" r="1.8" fill="#55534e"/><path d="M583 284L592 283L594 292L588 296L582 292Z" fill="#b8861f"/><path d="M630 283L652 285L655 291L632 291Z" fill="#d9a42c"/><path d="M626 296L640 294L642 300L628 303Z" fill="#b8861f"/><path d="M634 265L660 266L680 268L684 274L662 277L640 275Z" fill="#b8861f"/><path d="M638 262L648 260L650 270L640 272Z" fill="#8e8e8a"/><path d="M664 270L675 266L681 292L673 296Z" fill="#d9a42c" stroke="#6e5418" stroke-width=".5"/><path d="M667 268L678 266L679 272L668 274Z" fill="#7a7a76"/><path d="M649 297L664 288L692 290L699 298L673 296L657 305Z" fill="#d9a42c" stroke="#6e5418" stroke-width=".7"/><path d="M650 296L658 291L661 297L654 303Z" fill="#55534e"/><path d="M571 288L542 306.5L535 318L523 331" fill="none" stroke="#2a2622" stroke-width="5.4" stroke-linejoin="round"/><path d="M571 288L542 306.5L535 318L523 331" fill="none" stroke="#d9a42c" stroke-width="2.8000000000000003" stroke-dasharray="11 2.5 6 2" stroke-linejoin="round" transform="translate(-.6 -.5)"/><path d="M511 338L518.5 329L527 330L530 338Z" fill="#3a2c18" stroke="#d9a42c" stroke-width="1"/><path d="M599 304L594 322L588 340" fill="none" stroke="#2a2622" stroke-width="5.4" stroke-linejoin="round"/><path d="M599 304L594 322L588 340" fill="none" stroke="#d9a42c" stroke-width="2.8000000000000003" stroke-dasharray="11 2.5 6 2" stroke-linejoin="round" transform="translate(-.6 -.5)"/><path d="M580 346.5L585.0 340L591 341L594 346.5Z" fill="#3a2c18" stroke="#d9a42c" stroke-width="1"/><path d="M628 303L645 322L660 338" fill="none" stroke="#2a2622" stroke-width="5.4" stroke-linejoin="round"/><path d="M628 303L645 322L660 338" fill="none" stroke="#d9a42c" stroke-width="2.8000000000000003" stroke-dasharray="11 2.5 6 2" stroke-linejoin="round" transform="translate(-.6 -.5)"/><path d="M653 344L658.5 337L665 338L668 344Z" fill="#3a2c18" stroke="#d9a42c" stroke-width="1"/><path d="M664 296L683 308L706 322" fill="none" stroke="#2a2622" stroke-width="5.4" stroke-linejoin="round"/><path d="M664 296L683 308L706 322" fill="none" stroke="#d9a42c" stroke-width="2.8000000000000003" stroke-dasharray="11 2.5 6 2" stroke-linejoin="round" transform="translate(-.6 -.5)"/><path d="M697 330L706.5 322L717 323L720 330Z" fill="#3a2c18" stroke="#d9a42c" stroke-width="1"/><path d="M522 281L530 284L528 291L496 296L478 304L462 312L454 307L470 300L492 290Z" fill="#d9a42c" stroke="#5a4a28" stroke-width=".8"/><path d="M470 302L484 298L488 304L476 310L462 312Z" fill="#8e8e8a"/><rect x="519" y="279" width="10" height="13" fill="#b8b8b4" transform="rotate(-12 524 285)"/><path d="M486 300L498 306L500 311L492 309Z" fill="#d9a42c"/><path d="M864.2 130.5L909.5 122.4L913 163L858.8 170.1Z" fill="url(#cubeT)"/><path d="M858.8 170.1L913 163L919.4 185.7L876.9 190.7Z" fill="#3d3d3d"/><path d="M909.5 122.4L911.8 124L915.6 164L919.4 185.7L913 163Z" fill="#5e5e5e"/><path d="M858.8 170.1L913 163" stroke="#9a9a9a" stroke-width="1"/><g stroke="#3fdc48" stroke-width="3" fill="none" stroke-linecap="round"><path d="M873 148.2L879.6 147.2"/><path d="M882.2 136.6L890 146.4L898 134.4M890 146.4L890.8 153.6"/></g><g stroke="#3b8fe8" stroke-width="2.2" fill="none" stroke-linecap="round"><path d="M875.5 177L891 175L880 185.5L895 184"/><path d="M898 176L905.6 177.6"/></g><path d="M912.4 150l.1 0M913.4 158l.1 0M914.4 166l.1 0" stroke="#e0405a" stroke-width="1.2" stroke-linecap="round"/><path d="M941.5 107L952 107L952 122.6L941 122.6L939.4 113.6Z" fill="#3f3f3f"/><path d="M939.6 113.6L952 113" stroke="#8e8e8e" stroke-width="1"/></svg>
<div style="left:3px;top:385px;width:255px;height:297px;background:#2a2b2e;border-radius:3px;"></div>
<div style="left:257px;top:383px;width:2px;height:301px;background:#46474b;"></div>
<div style="left:4px;top:526px;width:254px;height:20px;background:#2b5676;"></div>
<svg style="left:7px;top:393.8px;" width="9" height="5" viewBox="0 0 9 5"><path d="M0 0H9L4.5 5Z" fill="#a8a8a8"/></svg>
<svg style="left:22px;top:389.2px;" width="16.2" height="14.2" viewBox="0 0 17 15"><path d="M.5 1.6Q.5 .6 1.5 .6H6.6L8.2 2.6H15.4Q16.2 2.6 16.2 3.6V13.4H.5Z" fill="#3d8bc4"/><rect x="1.6" y="3.4" width="13.6" height="9" fill="#e8eef2"/><path d="M.5 5.2H16.2V13Q16.2 14 15.2 14H1.5Q.5 14 .5 13Z" fill="#5fb2e6"/><path d="M.5 5.7H16.2" stroke="#8fd0f6" stroke-width=".9"/><path d="M8.4 7L5 10H6.2V12.6H10.6V10H11.8Z" fill="#3a7eb8" opacity=".75"/></svg>
<div style="left:44.30px;top:389.00px;line-height:16px;font-size:12px;color:#f0f0f0;transform:scaleX(0.9832);transform-origin:0 50%;white-space:nowrap;">Project</div>
<svg style="left:22px;top:413.8px;" width="9" height="5" viewBox="0 0 9 5"><path d="M0 0H9L4.5 5Z" fill="#a8a8a8"/></svg>
<svg style="left:37px;top:409.2px;" width="16.2" height="14.2" viewBox="0 0 17 15"><path d="M.5 1.6Q.5 .6 1.5 .6H6.6L8.2 2.6H15.4Q16.2 2.6 16.2 3.6V13.4H.5Z" fill="#3d8bc4"/><rect x="1.6" y="3.4" width="13.6" height="9" fill="#e8eef2"/><path d="M.5 5.2H16.2V13Q16.2 14 15.2 14H1.5Q.5 14 .5 13Z" fill="#5fb2e6"/><path d="M.5 5.7H16.2" stroke="#8fd0f6" stroke-width=".9"/></svg>
<div style="left:59.30px;top:409.00px;line-height:16px;font-size:12px;color:#f0f0f0;transform:scaleX(0.9821);transform-origin:0 50%;white-space:nowrap;">viewer</div>
<svg style="left:52px;top:429.2px;" width="16.2" height="14.2" viewBox="0 0 17 15"><path d="M.5 1.6Q.5 .6 1.5 .6H6.6L8.2 2.6H15.4Q16.2 2.6 16.2 3.6V13.4H.5Z" fill="#3d8bc4"/><rect x="1.6" y="3.4" width="13.6" height="9" fill="#e8eef2"/><path d="M.5 5.2H16.2V13Q16.2 14 15.2 14H1.5Q.5 14 .5 13Z" fill="#5fb2e6"/><path d="M.5 5.7H16.2" stroke="#8fd0f6" stroke-width=".9"/></svg>
<div style="left:74.30px;top:429.00px;line-height:16px;font-size:12px;color:#f0f0f0;transform:scaleX(1.0175);transform-origin:0 50%;white-space:nowrap;">environment</div>
<svg style="left:37px;top:453.8px;" width="9" height="5" viewBox="0 0 9 5"><path d="M0 0H9L4.5 5Z" fill="#a8a8a8"/></svg>
<svg style="left:52px;top:449.2px;" width="16.2" height="14.2" viewBox="0 0 17 15"><path d="M.5 1.6Q.5 .6 1.5 .6H6.6L8.2 2.6H15.4Q16.2 2.6 16.2 3.6V13.4H.5Z" fill="#3d8bc4"/><rect x="1.6" y="3.4" width="13.6" height="9" fill="#e8eef2"/><path d="M.5 5.2H16.2V13Q16.2 14 15.2 14H1.5Q.5 14 .5 13Z" fill="#5fb2e6"/><path d="M.5 5.7H16.2" stroke="#8fd0f6" stroke-width=".9"/></svg>
<div style="left:74.30px;top:449.00px;line-height:16px;font-size:12px;color:#f0f0f0;transform:scaleX(1.0130);transform-origin:0 50%;white-space:nowrap;">props</div>
<svg style="left:67px;top:469.2px;" width="16.2" height="14.2" viewBox="0 0 17 15"><path d="M.5 1.6Q.5 .6 1.5 .6H6.6L8.2 2.6H15.4Q16.2 2.6 16.2 3.6V13.4H.5Z" fill="#3d8bc4"/><rect x="1.6" y="3.4" width="13.6" height="9" fill="#e8eef2"/><path d="M.5 5.2H16.2V13Q16.2 14 15.2 14H1.5Q.5 14 .5 13Z" fill="#5fb2e6"/><path d="M.5 5.7H16.2" stroke="#8fd0f6" stroke-width=".9"/></svg>
<div style="left:89.30px;top:469.00px;line-height:16px;font-size:12px;color:#f0f0f0;transform:scaleX(1.0412);transform-origin:0 50%;white-space:nowrap;">ground</div>
<svg style="left:54px;top:492.3px;" width="5" height="9" viewBox="0 0 5 9"><path d="M.5 0L5 4.5L.5 9Z" fill="none" stroke="#a8a8a8" stroke-width="1"/></svg>
<svg style="left:67px;top:489.2px;" width="16.2" height="14.2" viewBox="0 0 17 15"><path d="M.5 1.6Q.5 .6 1.5 .6H6.6L8.2 2.6H15.4Q16.2 2.6 16.2 3.6V13.4H.5Z" fill="#3d8bc4"/><rect x="1.6" y="3.4" width="13.6" height="9" fill="#e8eef2"/><path d="M.5 5.2H16.2V13Q16.2 14 15.2 14H1.5Q.5 14 .5 13Z" fill="#5fb2e6"/><path d="M.5 5.7H16.2" stroke="#8fd0f6" stroke-width=".9"/></svg>
<div style="left:89.30px;top:489.00px;line-height:16px;font-size:12px;color:#f0f0f0;transform:scaleX(0.9827);transform-origin:0 50%;white-space:nowrap;">head</div>
<svg style="left:52px;top:513.8px;" width="9" height="5" viewBox="0 0 9 5"><path d="M0 0H9L4.5 5Z" fill="#a8a8a8"/></svg>
<svg style="left:67px;top:509.19999999999993px;" width="16.2" height="14.2" viewBox="0 0 17 15"><path d="M.5 1.6Q.5 .6 1.5 .6H6.6L8.2 2.6H15.4Q16.2 2.6 16.2 3.6V13.4H.5Z" fill="#3d8bc4"/><rect x="1.6" y="3.4" width="13.6" height="9" fill="#e8eef2"/><path d="M.5 5.2H16.2V13Q16.2 14 15.2 14H1.5Q.5 14 .5 13Z" fill="#5fb2e6"/><path d="M.5 5.7H16.2" stroke="#8fd0f6" stroke-width=".9"/></svg>
<div style="left:89.30px;top:509.00px;line-height:16px;font-size:12px;color:#f0f0f0;transform:scaleX(1.0234);transform-origin:0 50%;white-space:nowrap;">quadrocopter</div>
<svg style="left:82px;top:529.1999999999999px;" width="16.2" height="14.2" viewBox="0 0 17 15"><path d="M.5 1.6Q.5 .6 1.5 .6H6.6L8.2 2.6H15.4Q16.2 2.6 16.2 3.6V13.4H.5Z" fill="#3d8bc4"/><rect x="1.6" y="3.4" width="13.6" height="9" fill="#e8eef2"/><path d="M.5 5.2H16.2V13Q16.2 14 15.2 14H1.5Q.5 14 .5 13Z" fill="#5fb2e6"/><path d="M.5 5.7H16.2" stroke="#8fd0f6" stroke-width=".9"/></svg>
<div style="left:104.30px;top:529.00px;line-height:16px;font-size:12px;color:#f0f0f0;transform:scaleX(1.0195);transform-origin:0 50%;white-space:nowrap;">fbx</div>
<svg style="left:82px;top:549.1999999999999px;" width="16.2" height="14.2" viewBox="0 0 17 15"><path d="M.5 1.6Q.5 .6 1.5 .6H6.6L8.2 2.6H15.4Q16.2 2.6 16.2 3.6V13.4H.5Z" fill="#3d8bc4"/><rect x="1.6" y="3.4" width="13.6" height="9" fill="#e8eef2"/><path d="M.5 5.2H16.2V13Q16.2 14 15.2 14H1.5Q.5 14 .5 13Z" fill="#5fb2e6"/><path d="M.5 5.7H16.2" stroke="#8fd0f6" stroke-width=".9"/></svg>
<div style="left:104.30px;top:549.00px;line-height:16px;font-size:12px;color:#f0f0f0;transform:scaleX(0.9853);transform-origin:0 50%;white-space:nowrap;">materials</div>
<svg style="left:82px;top:569.1999999999999px;" width="16.2" height="14.2" viewBox="0 0 17 15"><path d="M.5 1.6Q.5 .6 1.5 .6H6.6L8.2 2.6H15.4Q16.2 2.6 16.2 3.6V13.4H.5Z" fill="#3d8bc4"/><rect x="1.6" y="3.4" width="13.6" height="9" fill="#e8eef2"/><path d="M.5 5.2H16.2V13Q16.2 14 15.2 14H1.5Q.5 14 .5 13Z" fill="#5fb2e6"/><path d="M.5 5.7H16.2" stroke="#8fd0f6" stroke-width=".9"/></svg>
<div style="left:104.30px;top:569.00px;line-height:16px;font-size:12px;color:#f0f0f0;transform:scaleX(0.9898);transform-origin:0 50%;white-space:nowrap;">textures</div>
<svg style="left:52px;top:589.1999999999999px;" width="16.2" height="14.2" viewBox="0 0 17 15"><path d="M.5 1.6Q.5 .6 1.5 .6H6.6L8.2 2.6H15.4Q16.2 2.6 16.2 3.6V13.4H.5Z" fill="#3d8bc4"/><rect x="1.6" y="3.4" width="13.6" height="9" fill="#e8eef2"/><path d="M.5 5.2H16.2V13Q16.2 14 15.2 14H1.5Q.5 14 .5 13Z" fill="#5fb2e6"/><path d="M.5 5.7H16.2" stroke="#8fd0f6" stroke-width=".9"/></svg>
<div style="left:74.30px;top:589.00px;line-height:16px;font-size:12px;color:#f0f0f0;transform:scaleX(0.9909);transform-origin:0 50%;white-space:nowrap;">quality_settings</div>
<svg style="left:52px;top:609.1999999999999px;" width="16.2" height="14.2" viewBox="0 0 17 15"><path d="M.5 1.6Q.5 .6 1.5 .6H6.6L8.2 2.6H15.4Q16.2 2.6 16.2 3.6V13.4H.5Z" fill="#3d8bc4"/><rect x="1.6" y="3.4" width="13.6" height="9" fill="#e8eef2"/><path d="M.5 5.2H16.2V13Q16.2 14 15.2 14H1.5Q.5 14 .5 13Z" fill="#5fb2e6"/><path d="M.5 5.7H16.2" stroke="#8fd0f6" stroke-width=".9"/></svg>
<div style="left:74.30px;top:609.00px;line-height:16px;font-size:12px;color:#f0f0f0;transform:scaleX(0.9801);transform-origin:0 50%;white-space:nowrap;">render_settings</div>
<svg style="left:9px;top:632.3px;" width="5" height="9" viewBox="0 0 5 9"><path d="M.5 0L5 4.5L.5 9Z" fill="none" stroke="#a8a8a8" stroke-width="1"/></svg>
<svg style="left:22px;top:629.1999999999999px;" width="16.2" height="14.2" viewBox="0 0 17 15"><path d="M.5 1.6Q.5 .6 1.5 .6H6.6L8.2 2.6H15.4Q16.2 2.6 16.2 3.6V13.4H.5Z" fill="#5e9c3a"/><rect x="1.6" y="3.4" width="13.6" height="9" fill="#e8eef2"/><path d="M.5 5.2H16.2V13Q16.2 14 15.2 14H1.5Q.5 14 .5 13Z" fill="#96d25a"/><path d="M.5 5.7H16.2" stroke="#b8e88a" stroke-width=".9"/><path d="M8 7L5 9.8H6V12.4H10V9.8H11Z" fill="#4e8a2c" opacity=".8"/><circle cx="12.8" cy="11.6" r="3" fill="#eeeeee"/><rect x="11.5" y="11.2" width="2.6" height="2" fill="#555"/><path d="M12 11.2V10.4a.8 .8 0 0 1 1.6 0V11.2" stroke="#555" stroke-width=".6" fill="none"/></svg>
<div style="left:44.30px;top:629.00px;line-height:16px;font-size:12px;color:#f0f0f0;transform:scaleX(0.9578);transform-origin:0 50%;white-space:nowrap;">Core</div>
<div style="left:265.00px;top:388.20px;line-height:16px;font-size:10.67px;color:#c8c8c8;transform:scaleX(1.2036);transform-origin:0 50%;white-space:nowrap;">&lt;</div>
<div style="left:282px;top:386px;width:9px;height:18px;background:#5a5b5f;"></div>
<div style="left:294px;top:386px;width:62px;height:18px;background:#5a5b5f;border-radius:2px;box-shadow:inset 0 1px 0 #606165;"></div>
<div style="left:309.58px;top:387.40px;line-height:16px;font-size:10.67px;color:#ececec;transform:scaleX(0.9821);transform-origin:50% 50%;white-space:nowrap;">viewer</div>
<div style="left:360px;top:386px;width:62px;height:18px;background:#5a5b5f;border-radius:2px;box-shadow:inset 0 1px 0 #606165;"></div>
<div style="left:377.65px;top:387.40px;line-height:16px;font-size:10.67px;color:#ececec;transform:scaleX(1.0130);transform-origin:50% 50%;white-space:nowrap;">props</div>
<div style="left:426px;top:386px;width:71px;height:18px;background:#5a5b5f;border-radius:2px;box-shadow:inset 0 1px 0 #606165;"></div>
<div style="left:430.06px;top:387.40px;line-height:16px;font-size:10.67px;color:#ececec;transform:scaleX(1.0234);transform-origin:50% 50%;white-space:nowrap;">quadrocopter</div>
<div style="left:501px;top:386px;width:62px;height:18px;background:#5a5b5f;border-radius:2px;box-shadow:inset 0 1px 0 #606165;"></div>
<div style="left:524.88px;top:387.40px;line-height:16px;font-size:10.67px;color:#ececec;transform:scaleX(1.0195);transform-origin:50% 50%;white-space:nowrap;">fbx</div>
<div style="left:570.00px;top:388.40px;line-height:16px;font-size:10.67px;color:#5e5f63;transform:scaleX(1.0432);transform-origin:0 50%;white-space:nowrap;">&gt;</div>
<div style="left:588px;top:386px;width:58px;height:18px;background:#5a5b5f;border-radius:2px;box-shadow:inset 0 1px 0 #606165;"></div>
<div style="left:598.30px;top:387.40px;line-height:16px;font-size:10.67px;color:#ececec;transform:scaleX(0.9819);transform-origin:0 50%;white-space:nowrap;">Filter</div>
<svg style="left:631px;top:392.8px;" width="10" height="5" viewBox="0 0 10 5"><path d="M0 0H10L5.0 5Z" fill="#f0f0f0"/></svg>
<div style="left:650px;top:386px;width:58px;height:18px;background:#5a5b5f;border-radius:2px;box-shadow:inset 0 1px 0 #606165;"></div>
<div style="left:663.88px;top:387.40px;line-height:16px;font-size:10.67px;color:#ececec;transform:scaleX(1.0543);transform-origin:50% 50%;white-space:nowrap;">Import</div>
<div style="left:712px;top:386px;width:58px;height:18px;background:#5a5b5f;border-radius:2px;box-shadow:inset 0 1px 0 #606165;"></div>
<div style="left:717.20px;top:387.40px;line-height:16px;font-size:10.67px;color:#ececec;transform:scaleX(0.9532);transform-origin:0 50%;white-space:nowrap;">Create</div>
<svg style="left:755px;top:392.8px;" width="10" height="5" viewBox="0 0 10 5"><path d="M0 0H10L5.0 5Z" fill="#f0f0f0"/></svg>
<div style="left:261px;top:407px;width:510px;height:253px;background:#2a2b2e;border-radius:2px;"></div>
<div style="left:273px;top:409px;width:64px;height:64px;background:#414246;border-radius:5px;"></div>
<svg style="left:281px;top:428px;" width="48" height="24" viewBox="0 0 48 24"><g opacity=".62">
<ellipse cx="9" cy="8" rx="8" ry="2.2" fill="#1e1e1e"/><ellipse cx="38" cy="7.4" rx="8.6" ry="2.2" fill="#1e1e1e"/>
<ellipse cx="28" cy="11" rx="6" ry="1.6" fill="#242424"/>
<path d="M14 8L22 6L28 7L33 8L30 12L22 14L16 12Z" fill="#2a2622"/>
<path d="M18 7L24 5.6L26 9L21 11Z" fill="#a8761e"/><path d="M22 11L28 12L24 15Z" fill="#8a5e18"/>
<path d="M12 12L8 15M15 13L13 17M24 15L23 21M27 14L30 17" stroke="#a8761e" stroke-width="1.3"/></g></svg>
<div style="left:265.30px;top:476.40px;line-height:16px;font-size:12px;color:#f0f0f0;transform:scaleX(0.9971);transform-origin:0 50%;white-space:nowrap;">quadrocopte...</div>
<div style="left:267.50px;top:665.00px;line-height:16px;font-size:10.67px;color:#d8d8d8;transform:scaleX(0.9934);transform-origin:0 50%;white-space:nowrap;">1 items</div>
<div style="left:672px;top:670px;width:98px;height:4px;background:#232427;border-radius:2px;"></div>
<div style="left:699px;top:667px;width:9px;height:12px;background:#bdbdbd;border-radius:2px;border:1px solid #8a8a8a;box-sizing:border-box;"></div>
<svg style="left:797px;top:455px;" width="134" height="118" viewBox="0 0 134 118"><defs><linearGradient id="ff" x1="0" x2="0" y1="0" y2="1"><stop offset="0" stop-color="#6abaea"/><stop offset="1" stop-color="#5aa8dc"/></linearGradient></defs>
<path d="M2 8Q2 3 7 3H38.5L46 11.6H118Q122.5 11.6 122.5 16V110Q122.5 114.8 118 114.8H7Q2 114.8 2 110Z" fill="#3a7fb3" stroke="#3f9ad6" stroke-width="1.2"/>
<path d="M2.6 30V109Q2.6 114 7 114H11V30Z" fill="#2c5e86"/>
<rect x="8" y="19" width="108" height="88" fill="#dfe1e2"/><path d="M8 19H116" stroke="#f6f6f6" stroke-width="1.4"/>
<path d="M11.4 37Q11.4 33 15.4 33H126Q130 33 130 37V110Q130 114.8 125.5 114.8H11Q11.4 114.8 11.4 110Z" fill="url(#ff)"/>
<path d="M12 36.5Q12 33.6 15.4 33.6H126Q129.4 33.6 129.4 36.5" fill="none" stroke="#8fd0f5" stroke-width="1"/></svg>
<div style="left:854.00px;top:579.20px;line-height:16px;font-size:12px;color:#e6e6e6;transform:scaleX(1.0000);transform-origin:50% 50%;white-space:nowrap;font-weight:bold;">fbx</div>
<div style="left:836.66px;top:594.50px;line-height:16px;font-size:12px;color:#d4d4d4;transform:scaleX(0.9299);transform-origin:50% 50%;white-space:nowrap;">Assets : 1</div>
<div style="left:960px;top:96px;width:403px;height:586px;border:1px solid #505155;box-sizing:border-box;"></div>
<div style="left:960px;top:78px;width:44px;height:19px;background:#404145;border:1px solid #5b6f7c;border-bottom:none;border-top:1px solid #3da5e0;border-radius:3px 3px 0 0;box-sizing:border-box;"></div>
<div style="left:966.60px;top:79.60px;line-height:16px;font-size:10.67px;color:#f0f0f0;transform:scaleX(1.0228);transform-origin:0 50%;white-space:nowrap;">Node</div>
<div style="left:968px;top:105px;width:12px;height:12px;border:1px solid #7b7b7b;box-sizing:border-box;"><div style="left:1.5px;top:1.5px;width:7.0px;height:7.0px;background:#adadad;"></div></div>
<div style="left:990px;top:102px;width:368px;height:19px;background:#2a2b2e;border:1px solid #4b4c50;box-sizing:border-box;"></div>
<div style="left:995.60px;top:103.60px;line-height:16px;font-size:10.67px;color:#dcdcdc;transform:scaleX(1.0018);transform-origin:0 50%;white-space:nowrap;">quadrocopter_ref</div>
<div style="left:967px;top:138px;width:391px;height:85px;background:#414246;border:1px solid #4c4d51;box-sizing:border-box;border-radius:2px;"></div>
<div style="left:975.50px;top:126.00px;line-height:16px;font-size:10.67px;color:#ececec;transform:scaleX(0.9911);transform-origin:0 50%;white-space:nowrap;">Transform</div>
<div style="left:981.34px;top:146.70px;line-height:16px;font-size:10.67px;color:#dcdcdc;transform:scaleX(0.9965);transform-origin:100% 50%;white-space:nowrap;">Position</div>
<div style="left:1027px;top:144.5px;width:94.5px;height:19px;background:#2a2b2e;border:1px solid #4b4c50;box-sizing:border-box;"></div>
<div style="left:1032.00px;top:146.60px;line-height:16px;font-size:10.67px;color:#dedede;transform:scaleX(0.9483);transform-origin:0 50%;white-space:nowrap;">0.000</div>
<svg style="left:1111.0px;top:148.1px;" width="7" height="12" viewBox="0 0 7 12"><path d="M0 3.6L3.5 .2L7 3.6Z" fill="#a4a4a4"/><path d="M0 8.4L3.5 11.8L7 8.4Z" fill="#a4a4a4"/></svg>
<div style="left:1128.5px;top:144.5px;width:94.5px;height:19px;background:#2a2b2e;border:1px solid #4b4c50;box-sizing:border-box;"></div>
<div style="left:1133.50px;top:146.60px;line-height:16px;font-size:10.67px;color:#dedede;transform:scaleX(0.9483);transform-origin:0 50%;white-space:nowrap;">0.000</div>
<svg style="left:1212.5px;top:148.1px;" width="7" height="12" viewBox="0 0 7 12"><path d="M0 3.6L3.5 .2L7 3.6Z" fill="#a4a4a4"/><path d="M0 8.4L3.5 11.8L7 8.4Z" fill="#a4a4a4"/></svg>
<div style="left:1230.5px;top:144.5px;width:94.5px;height:19px;background:#2a2b2e;border:1px solid #4b4c50;box-sizing:border-box;"></div>
<div style="left:1235.50px;top:146.60px;line-height:16px;font-size:10.67px;color:#dedede;transform:scaleX(0.9483);transform-origin:0 50%;white-space:nowrap;">0.000</div>
<svg style="left:1314.5px;top:148.1px;" width="7" height="12" viewBox="0 0 7 12"><path d="M0 3.6L3.5 .2L7 3.6Z" fill="#a4a4a4"/><path d="M0 8.4L3.5 11.8L7 8.4Z" fill="#a4a4a4"/></svg>
<svg style="left:1333.5px;top:148.0px;" width="11" height="11" viewBox="0 0 11 11"><path d="M1 1L10 10M10 1L1 10" stroke="#e4e4e4" stroke-width="1.8"/></svg>
<div style="left:979.56px;top:172.70px;line-height:16px;font-size:10.67px;color:#dcdcdc;transform:scaleX(1.0109);transform-origin:100% 50%;white-space:nowrap;">Rotation</div>
<div style="left:1027px;top:170.5px;width:94.5px;height:19px;background:#2a2b2e;border:1px solid #4b4c50;box-sizing:border-box;"></div>
<div style="left:1032.00px;top:172.60px;line-height:16px;font-size:10.67px;color:#dedede;transform:scaleX(0.9483);transform-origin:0 50%;white-space:nowrap;">0.000</div>
<svg style="left:1111.0px;top:174.1px;" width="7" height="12" viewBox="0 0 7 12"><path d="M0 3.6L3.5 .2L7 3.6Z" fill="#a4a4a4"/><path d="M0 8.4L3.5 11.8L7 8.4Z" fill="#a4a4a4"/></svg>
<div style="left:1128.5px;top:170.5px;width:94.5px;height:19px;background:#2a2b2e;border:1px solid #4b4c50;box-sizing:border-box;"></div>
<div style="left:1133.50px;top:172.60px;line-height:16px;font-size:10.67px;color:#dedede;transform:scaleX(0.9483);transform-origin:0 50%;white-space:nowrap;">0.000</div>
<svg style="left:1212.5px;top:174.1px;" width="7" height="12" viewBox="0 0 7 12"><path d="M0 3.6L3.5 .2L7 3.6Z" fill="#a4a4a4"/><path d="M0 8.4L3.5 11.8L7 8.4Z" fill="#a4a4a4"/></svg>
<div style="left:1230.5px;top:170.5px;width:94.5px;height:19px;background:#2a2b2e;border:1px solid #4b4c50;box-sizing:border-box;"></div>
<div style="left:1235.50px;top:172.60px;line-height:16px;font-size:10.67px;color:#dedede;transform:scaleX(0.9483);transform-origin:0 50%;white-space:nowrap;">0.000</div>
<svg style="left:1314.5px;top:174.1px;" width="7" height="12" viewBox="0 0 7 12"><path d="M0 3.6L3.5 .2L7 3.6Z" fill="#a4a4a4"/><path d="M0 8.4L3.5 11.8L7 8.4Z" fill="#a4a4a4"/></svg>
<svg style="left:1333.5px;top:174.0px;" width="11" height="11" viewBox="0 0 11 11"><path d="M1 1L10 10M10 1L1 10" stroke="#e4e4e4" stroke-width="1.8"/></svg>
<div style="left:992.61px;top:198.70px;line-height:16px;font-size:10.67px;color:#dcdcdc;transform:scaleX(0.9063);transform-origin:100% 50%;white-space:nowrap;">Scale</div>
<div style="left:1027px;top:196.5px;width:94.5px;height:19px;background:#2a2b2e;border:1px solid #4b4c50;box-sizing:border-box;"></div>
<div style="left:1032.00px;top:198.60px;line-height:16px;font-size:10.67px;color:#dedede;transform:scaleX(0.9483);transform-origin:0 50%;white-space:nowrap;">1.000</div>
<svg style="left:1111.0px;top:200.1px;" width="7" height="12" viewBox="0 0 7 12"><path d="M0 3.6L3.5 .2L7 3.6Z" fill="#a4a4a4"/><path d="M0 8.4L3.5 11.8L7 8.4Z" fill="#a4a4a4"/></svg>
<div style="left:1128.5px;top:196.5px;width:94.5px;height:19px;background:#2a2b2e;border:1px solid #4b4c50;box-sizing:border-box;"></div>
<div style="left:1133.50px;top:198.60px;line-height:16px;font-size:10.67px;color:#dedede;transform:scaleX(0.9483);transform-origin:0 50%;white-space:nowrap;">1.000</div>
<svg style="left:1212.5px;top:200.1px;" width="7" height="12" viewBox="0 0 7 12"><path d="M0 3.6L3.5 .2L7 3.6Z" fill="#a4a4a4"/><path d="M0 8.4L3.5 11.8L7 8.4Z" fill="#a4a4a4"/></svg>
<div style="left:1230.5px;top:196.5px;width:94.5px;height:19px;background:#2a2b2e;border:1px solid #4b4c50;box-sizing:border-box;"></div>
<div style="left:1235.50px;top:198.60px;line-height:16px;font-size:10.67px;color:#dedede;transform:scaleX(0.9483);transform-origin:0 50%;white-space:nowrap;">1.000</div>
<svg style="left:1314.5px;top:200.1px;" width="7" height="12" viewBox="0 0 7 12"><path d="M0 3.6L3.5 .2L7 3.6Z" fill="#a4a4a4"/><path d="M0 8.4L3.5 11.8L7 8.4Z" fill="#a4a4a4"/></svg>
<svg style="left:1333.5px;top:200.0px;" width="11" height="11" viewBox="0 0 11 11"><path d="M1 1L10 10M10 1L1 10" stroke="#e4e4e4" stroke-width="1.8"/></svg>
<div style="left:967px;top:240px;width:391px;height:73px;background:#414246;border:1px solid #4c4d51;box-sizing:border-box;border-radius:2px;"></div>
<div style="left:975.50px;top:228.00px;line-height:16px;font-size:10.67px;color:#ececec;transform:scaleX(1.0055);transform-origin:0 50%;white-space:nowrap;">Common</div>
<div style="left:1032.63px;top:249.20px;line-height:16px;font-size:10.67px;color:#d8d8d8;transform:scaleX(1.0021);transform-origin:100% 50%;white-space:nowrap;">Collider Object</div>
<div style="left:1110px;top:250px;width:12px;height:12px;border:1px solid #7b7b7b;box-sizing:border-box;"><div style="left:1.5px;top:1.5px;width:7.0px;height:7.0px;background:#adadad;"></div></div>
<div style="left:974.71px;top:269.20px;line-height:16px;font-size:10.67px;color:#d8d8d8;transform:scaleX(0.9926);transform-origin:100% 50%;white-space:nowrap;">Visibility by Sectors/Portals</div>
<div style="left:1110px;top:270px;width:12px;height:12px;border:1px solid #7b7b7b;box-sizing:border-box;"><div style="left:1.5px;top:1.5px;width:7.0px;height:7.0px;background:#adadad;"></div></div>
<div style="left:1039.13px;top:289.20px;line-height:16px;font-size:10.67px;color:#d8d8d8;transform:scaleX(0.9814);transform-origin:100% 50%;white-space:nowrap;">Updated Last</div>
<div style="left:1110px;top:290px;width:12px;height:12px;border:1px solid #7b7b7b;box-sizing:border-box;"></div>
<div style="left:1187.11px;top:249.20px;line-height:16px;font-size:10.67px;color:#d8d8d8;transform:scaleX(0.9894);transform-origin:100% 50%;white-space:nowrap;">Culled by Clutter Tree</div>
<div style="left:1298px;top:250px;width:12px;height:12px;border:1px solid #7b7b7b;box-sizing:border-box;"></div>
<div style="left:1163.99px;top:269.20px;line-height:16px;font-size:10.67px;color:#d8d8d8;transform:scaleX(0.9844);transform-origin:100% 50%;white-space:nowrap;">Culled by Occlusion Query</div>
<div style="left:1298px;top:270px;width:12px;height:12px;border:1px solid #7b7b7b;box-sizing:border-box;"></div>
<div style="left:967px;top:330px;width:391px;height:32px;background:#414246;border:1px solid #4c4d51;box-sizing:border-box;border-radius:2px;"></div>
<div style="left:975.50px;top:318.00px;line-height:16px;font-size:10.67px;color:#ececec;transform:scaleX(1.0073);transform-origin:0 50%;white-space:nowrap;">Node Property</div>
<div style="left:973px;top:336.5px;width:300px;height:19px;background:#2a2b2e;border:1px solid #4b4c50;box-sizing:border-box;"></div>
<svg style="left:1278px;top:338px;" width="17" height="15" viewBox="0 0 17 15"><path d="M1 2Q1 1 2 1H6L7.4 2.8H14.6Q15.6 2.8 15.6 3.8V13H1Z" fill="none" stroke="#e2e2e2" stroke-width="1.2"/><rect x="3.4" y="5.6" width="12" height="7.4" fill="#8e8e8e" stroke="#dcdcdc" stroke-width=".9"/></svg>
<svg style="left:1303px;top:337.4px;" width="18" height="18" viewBox="0 0 18 18"><path d="M1.2 10.5V16.6H16.6V10.5" fill="none" stroke="#cfcfcf" stroke-width="1.3"/><path d="M11.8 .6L13.4 8H10.6L8.4 14.2L5.4 13.2L7.6 7H5Z" fill="#bdbdbd"/></svg>
<svg style="left:1332.6px;top:340.2px;" width="11.5" height="11.5" viewBox="0 0 11.5 11.5"><path d="M1 1L10.5 10.5M10.5 1L1 10.5" stroke="#e4e4e4" stroke-width="1.8"/></svg>
<div style="left:967px;top:382px;width:391px;height:65px;background:#414246;border:1px solid #4c4d51;box-sizing:border-box;border-radius:2px;"></div>
<div style="left:973.20px;top:370.00px;line-height:16px;font-size:10.67px;color:#ececec;transform:scaleX(0.9491);transform-origin:0 50%;white-space:nowrap;">Reference</div>
<div style="left:972.60px;top:394.20px;line-height:16px;font-size:10.67px;color:#d8d8d8;transform:scaleX(0.9901);transform-origin:0 50%;white-space:nowrap;">Name</div>
<div style="left:1007px;top:391.5px;width:293px;height:19px;background:#2a2b2e;border:1px solid #4b4c50;box-sizing:border-box;"></div>
<div style="left:1010px;top:393.5px;width:16px;height:15px;background:#424347;"></div>
<svg style="left:1014px;top:398px;" width="8" height="5" viewBox="0 0 8 5"><path d="M.5 .8L4 3.6L7.5 .8" stroke="#6a5040" stroke-width="1.3" fill="none"/></svg>
<div style="left:1031.60px;top:394.20px;line-height:16px;font-size:10.67px;color:#dcdcdc;transform:scaleX(1.0205);transform-origin:0 50%;white-space:nowrap;">quadrocopter.node</div>
<svg style="left:1305px;top:393.6px;" width="17" height="15" viewBox="0 0 17 15"><path d="M1 2Q1 1 2 1H6L7.4 2.8H14.6Q15.6 2.8 15.6 3.8V13H1Z" fill="none" stroke="#e2e2e2" stroke-width="1.2"/><rect x="3.4" y="5.6" width="12" height="7.4" fill="#8e8e8e" stroke="#dcdcdc" stroke-width=".9"/></svg>
<svg style="left:1330.4px;top:392px;" width="18" height="18" viewBox="0 0 18 18"><path d="M1.2 10.5V16.6H16.6V10.5" fill="none" stroke="#cfcfcf" stroke-width="1.3"/><path d="M11.8 .6L13.4 8H10.6L8.4 14.2L5.4 13.2L7.6 7H5Z" fill="#36b6ee"/></svg>
<div style="left:973.5px;top:418px;width:121px;height:19px;background:#5c5d61;border-radius:2px;box-shadow:inset 0 1px 0 #6a6b6f;"></div>
<div style="left:1024.81px;top:418.80px;line-height:16px;font-size:10.67px;color:#f2f2f2;transform:scaleX(0.9720);transform-origin:50% 50%;white-space:nowrap;">Edit</div>
<div style="left:1102px;top:418px;width:120px;height:19px;background:#4a4b4f;border-radius:2px;box-shadow:inset 0 1px 0 #535458;"></div>
<div style="left:1148.65px;top:418.80px;line-height:16px;font-size:10.67px;color:#333438;transform:scaleX(1.0182);transform-origin:50% 50%;white-space:nowrap;">Apply</div>
<div style="left:1229px;top:418px;width:120.5px;height:19px;background:#4a4b4f;border-radius:2px;box-shadow:inset 0 1px 0 #535458;"></div>
<div style="left:1272.64px;top:418.80px;line-height:16px;font-size:10.67px;color:#333438;transform:scaleX(0.9384);transform-origin:50% 50%;white-space:nowrap;">Cancel</div>
</div></body></html>
